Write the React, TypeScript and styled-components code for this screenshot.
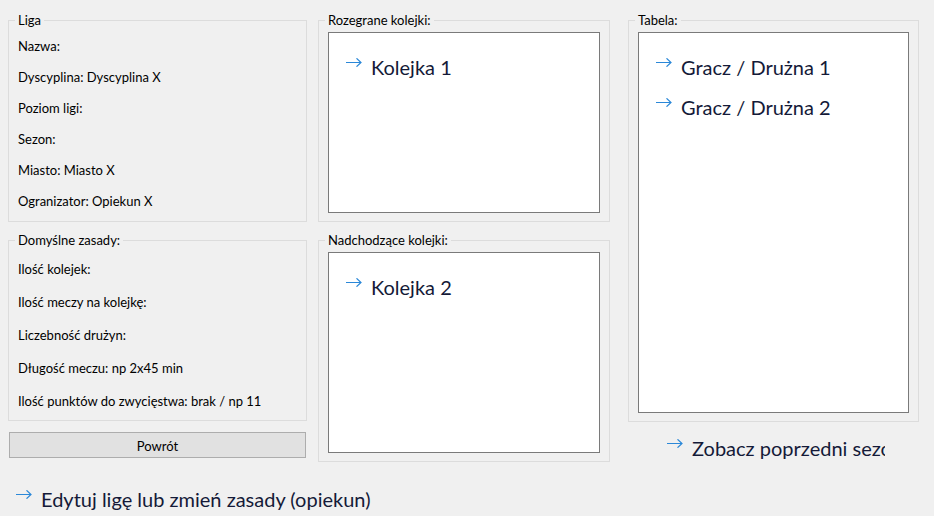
import React from "react";
import styled, { createGlobalStyle } from "styled-components";

const Global = createGlobalStyle`
  html, body { margin: 0; padding: 0; background: #f0f0f0; }
  body { font-family: "Segoe UI", Lato, "Noto Sans", sans-serif; color: #000; }
  * { box-sizing: border-box; }
`;

const Page = styled.div`
  width: 934px;
  height: 516px;
  overflow: hidden;
  background: #f0f0f0;
  padding: 12px 0 0 8px;
`;

const Columns = styled.div`
  display: flex;
  align-items: flex-start;
`;

const Column = styled.div<{ $width: number; $offset?: number }>`
  display: flex;
  flex-direction: column;
  width: ${(p) => p.$width}px;
  margin-left: ${(p) => p.$offset ?? 0}px;
`;

const Group = styled.fieldset<{ $pt: number; $pb: number; $mt?: number }>`
  margin: ${(p) => p.$mt ?? 0}px 0 0 0;
  min-width: 0;
  border: 1px solid #dcdcdc;
  padding: ${(p) => p.$pt}px 9px ${(p) => p.$pb}px 9px;
  display: flex;
  flex-direction: column;
`;

const Legend = styled.legend`
  font-size: 13px;
  line-height: 16px;
  padding: 0 3px;
  margin-left: -3px;
  color: #000;
`;

const Fields = styled.div<{ $gap: number }>`
  display: flex;
  flex-direction: column;
  gap: ${(p) => p.$gap}px;
`;

const Field = styled.div`
  font-size: 13px;
  line-height: 16px;
  white-space: nowrap;
`;

const Button = styled.button`
  margin: 11px 0 0 1px;
  width: 297px;
  height: 26px;
  background: #e1e1e1;
  border: 1px solid #adadad;
  font-family: inherit;
  font-size: 13px;
  line-height: 16px;
  color: #000;
  padding: 1px 0 0;
`;

const ListBox = styled.div<{ $height: number }>`
  height: ${(p) => p.$height}px;
  background: #fff;
  border: 1px solid #7a7a7a;
  padding: 20px 0 0 17px;
  display: flex;
  flex-direction: column;
  gap: 12px;
`;

const LinkRow = styled.div`
  display: flex;
  align-items: flex-start;
  gap: 9px;
  font-size: 20px;
  line-height: 28px;
  color: #141a38;
  white-space: nowrap;
`;

const ArrowIcon = styled.svg`
  flex: none;
  margin-top: 5px;
`;

const ClipBox = styled.div`
  margin-top: 12px;
  width: 257px;
  padding-left: 39px;
  overflow: hidden;
`;

const Footer = styled.div`
  margin-top: 23px;
  padding-left: 8px;
`;

const Arrow = () => (
  <ArrowIcon width="16" height="9" viewBox="0 0 16 9" fill="none">
    <path d="M0 4.5H15M10.5 0.3L15 4.5L10.5 8.7" stroke="#2b88d8" strokeWidth="1.2" />
  </ArrowIcon>
);

const Link = ({ children }: { children: React.ReactNode }) => (
  <LinkRow>
    <Arrow />
    <span>{children}</span>
  </LinkRow>
);

export default function App() {
  return (
    <>
      <Global />
      <Page>
        <Columns>
          <Column $width={299}>
            <Group $pt={10} $pb={12}>
              <Legend>Liga</Legend>
              <Fields $gap={15}>
                <Field>Nazwa:</Field>
                <Field>Dyscyplina: Dyscyplina X</Field>
                <Field>Poziom ligi:</Field>
                <Field>Sezon:</Field>
                <Field>Miasto: Miasto X</Field>
                <Field>Ogranizator: Opiekun X</Field>
              </Fields>
            </Group>
            <Group $pt={13} $pb={11} $mt={10}>
              <Legend>Domyślne zasady:</Legend>
              <Fields $gap={17}>
                <Field>Ilość kolejek:</Field>
                <Field>Ilość meczy na kolejkę:</Field>
                <Field>Liczebność drużyn:</Field>
                <Field>Długość meczu: np 2x45 min</Field>
                <Field>Ilość punktów do zwycięstwa: brak / np 11</Field>
              </Fields>
            </Group>
            <Button>Powrót</Button>
          </Column>
          <Column $width={292} $offset={11}>
            <Group $pt={4} $pb={8}>
              <Legend>Rozegrane kolejki:</Legend>
              <ListBox $height={181}>
                <Link>Kolejka 1</Link>
              </ListBox>
            </Group>
            <Group $pt={4} $pb={8} $mt={10}>
              <Legend>Nadchodzące kolejki:</Legend>
              <ListBox $height={201}>
                <Link>Kolejka 2</Link>
              </ListBox>
            </Group>
          </Column>
          <Column $width={291} $offset={18}>
            <Group $pt={4} $pb={8}>
              <Legend>Tabela:</Legend>
              <ListBox $height={381}>
                <Link>Gracz / Drużna 1</Link>
                <Link>Gracz / Drużna 2</Link>
              </ListBox>
            </Group>
            <ClipBox>
              <Link>Zobacz poprzedni sezon</Link>
            </ClipBox>
          </Column>
        </Columns>
        <Footer>
          <Link>Edytuj ligę lub zmień zasady (opiekun)</Link>
        </Footer>
      </Page>
    </>
  );
}
